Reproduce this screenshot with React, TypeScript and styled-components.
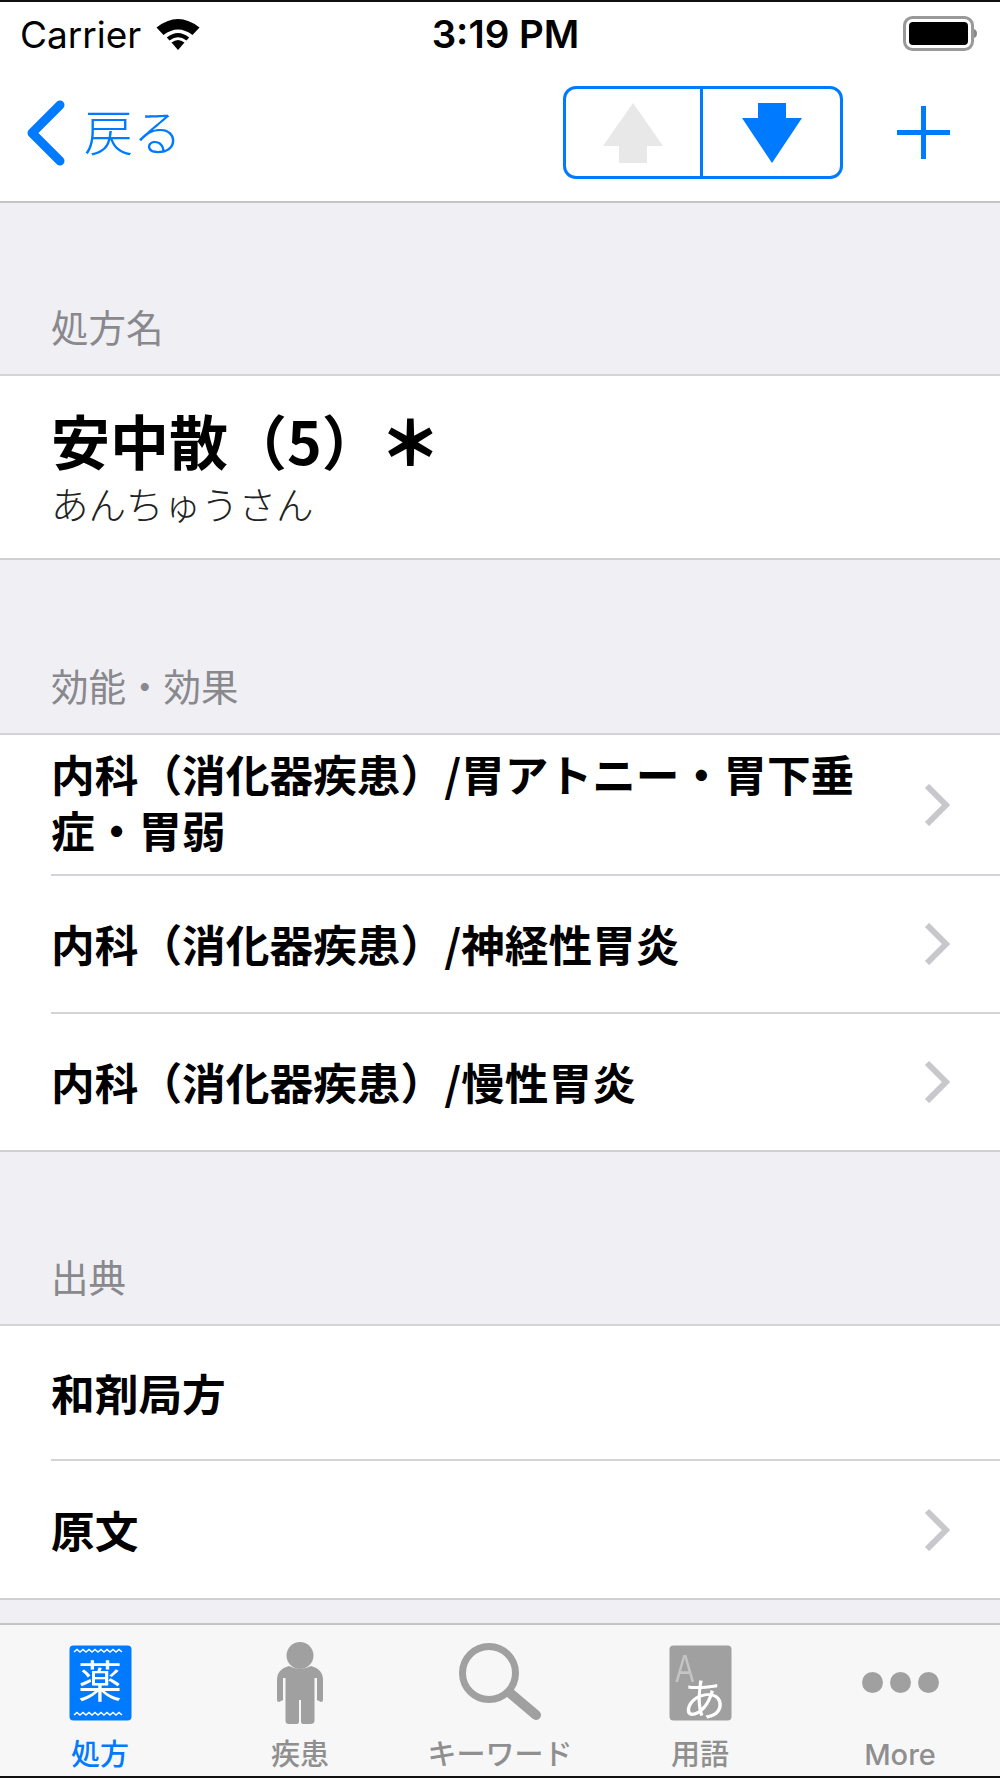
import React from "react";
import styled, { createGlobalStyle } from "styled-components";

const BLUE = "#007aff";
const GRAY = "#a0a0a0";

const GlobalStyle = createGlobalStyle`
  html, body {
    margin: 0;
    padding: 0;
    background: #000;
  }
  * {
    box-sizing: border-box;
  }
`;

const Screen = styled.div`
  width: 1000px;
  height: 1778px;
  display: flex;
  flex-direction: column;
  overflow: hidden;
  background: #efeff4;
  border-top: 2px solid #111;
  border-bottom: 2px solid #111;
  font-family: "Liberation Sans", "Noto Sans CJK JP", sans-serif;
  color: #000;
`;

const StatusBar = styled.div`
  height: 64px;
  flex: none;
  display: grid;
  grid-template-columns: 1fr auto 1fr;
  align-items: center;
  padding: 0 23px 0 20px;
  background: #fff;
  font-family: Inter, "Liberation Sans", sans-serif;
  font-size: 37px;
`;

const Carrier = styled.div`
  display: flex;
  align-items: center;
  gap: 15px;
`;

const Clock = styled.div`
  margin-left: 14px;
  font-size: 38.5px;
  font-weight: 600;
`;

const Battery = styled.svg`
  justify-self: end;
  display: block;
`;

const NavBar = styled.div`
  height: 137px;
  flex: none;
  display: flex;
  align-items: center;
  padding: 0 50px 2px 26px;
  background: #fff;
  border-bottom: 2px solid #c4c4c7;
`;

const BackLink = styled.div`
  display: flex;
  align-items: center;
  gap: 18px;
  color: ${BLUE};
  font-family: "Noto Sans CJK JP", sans-serif;
  font-size: 49px;
  font-weight: 300;
`;

const BackLabel = styled.span`
  margin-top: -6px;
`;

const NavActions = styled.div`
  margin-left: auto;
  display: flex;
  align-items: center;
  gap: 54px;
`;

const Segment = styled.div`
  width: 280px;
  height: 93px;
  display: grid;
  grid-template-columns: 1fr 1fr;
  border: 3px solid ${BLUE};
  border-radius: 13px;
`;

const SegmentCell = styled.div<{ $divided?: boolean }>`
  display: flex;
  align-items: center;
  justify-content: center;
  border-right: ${(p) => (p.$divided ? `3px solid ${BLUE}` : "none")};
`;

const Content = styled.div`
  flex: 1;
  display: flex;
  flex-direction: column;
`;

const SectionHeader = styled.div<{ $height: number }>`
  height: ${(p) => p.$height}px;
  flex: none;
  display: flex;
  align-items: flex-end;
  padding: 0 0 24px 51px;
  font-family: "Noto Sans CJK JP", sans-serif;
  font-size: 37.5px;
  line-height: 48px;
  font-weight: 400;
  color: #88888d;
`;

const Group = styled.div`
  background: #fff;
  border-top: 2px solid #d4d4d8;
  border-bottom: 2px solid #d0d0d4;
  flex: none;
`;

const TitleBlock = styled.div`
  height: 182px;
  padding: 24px 0 0 51px;
  font-family: "Noto Sans CJK JP", sans-serif;
`;

const TitleText = styled.div`
  font-size: 59px;
  line-height: 80px;
  font-weight: 700;
`;

const Asterisk = styled.span`
  -webkit-text-stroke: 2px #000;
`;

const Reading = styled.div`
  font-size: 37.5px;
  line-height: 46px;
  font-weight: 300;
  color: #222;
`;

const Row = styled.div<{ $height: number; $last?: boolean }>`
  height: ${(p) => p.$height}px;
  margin-left: 51px;
  display: flex;
  align-items: center;
  padding-right: 50px;
  border-bottom: ${(p) => (p.$last ? "none" : "2px solid #d4d4d8")};
`;

const RowText = styled.div<{ $lift?: number }>`
  flex: 1;
  max-width: 830px;
  padding-bottom: ${(p) => p.$lift ?? 2}px;
  font-family: "Noto Sans CJK JP", sans-serif;
  font-size: 43.7px;
  line-height: 56px;
  font-weight: 700;
`;

const Chevron = styled.svg`
  margin-left: auto;
  flex: none;
  display: block;
`;

const TabBar = styled.div`
  margin-top: auto;
  height: 153px;
  flex: none;
  display: grid;
  grid-template-columns: repeat(5, 1fr);
  background: #f7f7f8;
  border-top: 2px solid #c4c4c7;
`;

const Tab = styled.div<{ $active?: boolean }>`
  display: flex;
  flex-direction: column;
  align-items: center;
  color: ${(p) => (p.$active ? BLUE : "#8f8f8f")};
`;

const TabIcon = styled.div<{ $drop?: number }>`
  height: 96px;
  display: flex;
  align-items: flex-end;
  justify-content: center;
  filter: blur(0.5px);
  & > * {
    margin-bottom: ${(p) => -(p.$drop ?? 0)}px;
  }
`;

const TabLabel = styled.div`
  margin-top: 14px;
  font-family: Inter, "Noto Sans CJK JP", sans-serif;
  font-size: 29px;
  line-height: 40px;
  font-weight: 500;
  white-space: nowrap;
`;

const MoreDots = styled.div`
  display: flex;
  gap: 7px;
  margin-bottom: 28px;
`;

const Dot = styled.span`
  width: 21px;
  height: 21px;
  border-radius: 50%;
  background: ${GRAY};
`;

const Wifi = () => (
  <svg width="44" height="32" viewBox="0 0 44 32">
    <path d="M22 32 L15.5 24.5 Q22 19.5 28.5 24.5 Z" fill="#000" />
    <path d="M10.8 19.5 Q22 10.5 33.2 19.5 L30.5 22.6 Q22 16 13.5 22.6 Z" fill="#000" />
    <path d="M0.5 9.5 Q22 -7.5 43.5 9.5 L36.5 17 Q22 6 7.5 17 Z" fill="#000" />
  </svg>
);

const BatteryIcon = () => (
  <Battery width="74" height="36" viewBox="0 0 74 36">
    <rect x="1.5" y="1.5" width="68" height="32" rx="8" fill="none" stroke="#999" strokeWidth="3" />
    <rect x="6" y="6" width="59" height="23" rx="4" fill="#000" />
    <path d="M71 13 Q74 14 74 17.500 Q74 21 71 22 Z" fill="#888" />
  </Battery>
);

const RowChevron = () => (
  <Chevron width="26" height="42" viewBox="0 0 26 42">
    <path d="M3 2 L22 21 L3 40" fill="none" stroke="#c7c7cc" strokeWidth="6" />
  </Chevron>
);

const MedicineIcon = () => (
  <svg width="63" height="76" viewBox="0 0 63 76">
    <rect x="0.500" y="0.500" width="62" height="75" rx="4" fill={BLUE} />
    <path
      d="M5 7l3-2.500 3 2.500 3-2.500 3 2.500 3-2.500 3 2.500 3-2.500 3 2.500 3-2.500 3 2.500 3-2.500 3 2.500 3-2.500 3 2.500 3-2.500 3 2.500"
      fill="none"
      stroke="#fff"
      strokeWidth="1.500"
    />
    <path
      d="M5 70l3-2.500 3 2.500 3-2.500 3 2.500 3-2.500 3 2.500 3-2.500 3 2.500 3-2.500 3 2.500 3-2.500 3 2.500 3-2.500 3 2.500 3-2.500 3 2.500"
      fill="none"
      stroke="#fff"
      strokeWidth="1.500"
    />
    <text x="31" y="53" textAnchor="middle" fontSize="44" fill="#fff" fontFamily="'Noto Sans CJK JP', sans-serif" fontWeight="400">
      薬
    </text>
  </svg>
);

const PersonIcon = () => (
  <svg width="48" height="83" viewBox="0 0 48 83" fill={GRAY}>
    <circle cx="24" cy="13.500" r="13.500" />
    <path d="M13 24 Q24 30 35 24 Q47 27 47 38 L47 58 Q47 60 45 60 L41 58 L41 36 L38.500 36 L38.500 79 Q38.500 82 34 82 L27 82 Q25 82 25 79 L25 58 L23 58 L23 79 Q23 82 21 82 L13 82 Q9.500 82 9.500 79 L9.500 36 L7 36 L7 58 L3 60 Q1 60 1 58 L1 38 Q1 27 13 24 Z" />
  </svg>
);

const SearchIcon = () => (
  <svg width="84" height="78" viewBox="0 0 84 78">
    <circle cx="31" cy="30" r="26.500" fill="none" stroke={GRAY} strokeWidth="7" />
    <path d="M52 50 L78 72" fill="none" stroke={GRAY} strokeWidth="10" strokeLinecap="round" />
  </svg>
);

const GlossaryIcon = () => (
  <svg width="63" height="76" viewBox="0 0 63 76">
    <rect x="0.500" y="0.500" width="62" height="75" rx="4" fill={GRAY} />
    <text x="21" y="37" textAnchor="middle" fontSize="38" fill="#c4c4c4" fontFamily="'Liberation Sans', sans-serif" transform="scale(0.75 1)">
      A
    </text>
    <text x="35" y="71" textAnchor="middle" fontSize="44" fill="#fff" fontFamily="'Noto Sans CJK JP', sans-serif" fontWeight="400">
      あ
    </text>
  </svg>
);

export default function App() {
  return (
    <Screen>
      <GlobalStyle />
      <StatusBar>
        <Carrier>
          Carrier
          <Wifi />
        </Carrier>
        <Clock>3:19 PM</Clock>
        <BatteryIcon />
      </StatusBar>

      <NavBar>
        <BackLink>
          <svg width="40" height="66" viewBox="0 0 40 66">
            <path d="M34 5 L6 33 L34 61" fill="none" stroke={BLUE} strokeWidth="9" strokeLinecap="round" strokeLinejoin="round" />
          </svg>
          <BackLabel>戻る</BackLabel>
        </BackLink>
        <NavActions>
          <Segment>
            <SegmentCell $divided>
              <svg width="60" height="60" viewBox="0 0 60 60">
                <path d="M30 0 L60 43 L44 43 L44 60 L16 60 L16 43 L0 43 Z" fill="#e8e8e8" />
              </svg>
            </SegmentCell>
            <SegmentCell>
              <svg width="60" height="60" viewBox="0 0 60 60">
                <path d="M16 0 L44 0 L44 15 L60 15 L30 60 L0 15 L16 15 Z" fill={BLUE} />
              </svg>
            </SegmentCell>
          </Segment>
          <svg width="53" height="53" viewBox="0 0 53 53">
            <path d="M26.500 0 V53 M0 26.500 H53" fill="none" stroke={BLUE} strokeWidth="5" />
          </svg>
        </NavActions>
      </NavBar>

      <Content>
        <SectionHeader $height={171}>処方名</SectionHeader>
        <Group>
          <TitleBlock>
            <TitleText>
              安中散（5）<Asterisk>＊</Asterisk>
            </TitleText>
            <Reading>あんちゅうさん</Reading>
          </TitleBlock>
        </Group>

        <SectionHeader $height={173}>効能・効果</SectionHeader>
        <Group>
          <Row $height={141}>
            <RowText $lift={7}>内科（消化器疾患）/胃アトニー・胃下垂症・胃弱</RowText>
            <RowChevron />
          </Row>
          <Row $height={138}>
            <RowText>内科（消化器疾患）/神経性胃炎</RowText>
            <RowChevron />
          </Row>
          <Row $height={136} $last>
            <RowText $lift={3}>内科（消化器疾患）/慢性胃炎</RowText>
            <RowChevron />
          </Row>
        </Group>

        <SectionHeader $height={172}>出典</SectionHeader>
        <Group>
          <Row $height={135}>
            <RowText>和剤局方</RowText>
          </Row>
          <Row $height={137} $last>
            <RowText>原文</RowText>
            <RowChevron />
          </Row>
        </Group>
      </Content>

      <TabBar>
        <Tab $active>
          <TabIcon>
            <MedicineIcon />
          </TabIcon>
          <TabLabel>処方</TabLabel>
        </Tab>
        <Tab>
          <TabIcon $drop={4}>
            <PersonIcon />
          </TabIcon>
          <TabLabel>疾患</TabLabel>
        </Tab>
        <Tab>
          <TabIcon>
            <SearchIcon />
          </TabIcon>
          <TabLabel>キーワード</TabLabel>
        </Tab>
        <Tab>
          <TabIcon>
            <GlossaryIcon />
          </TabIcon>
          <TabLabel>用語</TabLabel>
        </Tab>
        <Tab>
          <TabIcon>
            <MoreDots>
              <Dot />
              <Dot />
              <Dot />
            </MoreDots>
          </TabIcon>
          <TabLabel>More</TabLabel>
        </Tab>
      </TabBar>
    </Screen>
  );
}
